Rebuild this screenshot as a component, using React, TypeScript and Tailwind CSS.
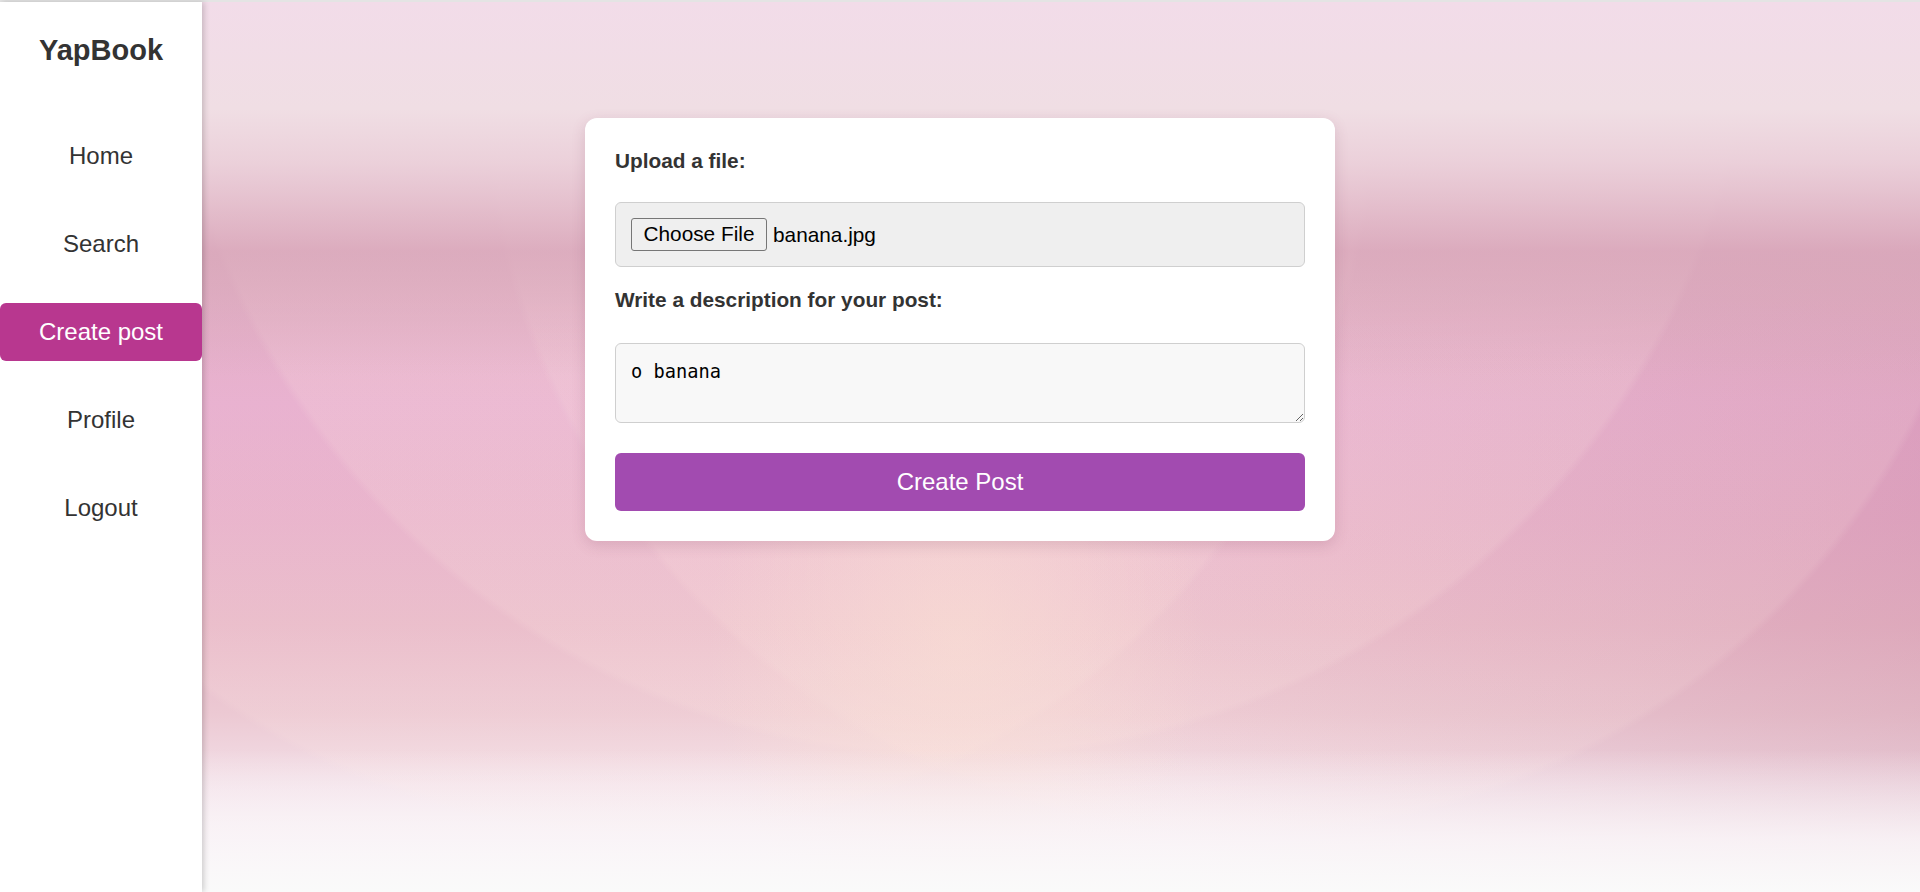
const NAV = ['Home', 'Search', 'Create post', 'Profile', 'Logout']

function Sidebar({ active }: { active: string }) {
  return (
    <aside className="relative z-10 flex w-[202px] shrink-0 flex-col bg-white pt-[31px] shadow-[2px_0_6px_rgba(0,0,0,0.18)]">
      <div className="text-center text-[29px] font-bold leading-[34px] text-[#333]">YapBook</div>
      <nav className="mt-[60px] flex flex-col gap-[30px]">
        {NAV.map((item) => (
          <a
            key={item}
            href="#"
            className={
              item === active
                ? 'flex h-[58px] items-center justify-center rounded-[6px] bg-[#b8378f] text-[24px] text-white'
                : 'flex h-[58px] items-center justify-center text-[24px] text-[#333]'
            }
          >
            {item}
          </a>
        ))}
      </nav>
    </aside>
  )
}

function CreatePostCard() {
  return (
    <form
      onSubmit={(e) => e.preventDefault()}
      className="ml-[383px] flex w-[750px] flex-col rounded-[12px] bg-white px-[30px] pt-[31px] pb-[30px] shadow-[0_4px_14px_rgba(120,60,90,0.18)]"
    >
      <label className="block text-[20.8px] font-bold leading-[23px] text-[#333]">Upload a file:</label>
      <div className="mt-[30px] flex h-[65px] items-center rounded-[6px] border border-[#cfcfcf] bg-[#efefef] px-[15px]">
        <button
          type="button"
          className="h-[33px] w-[136px] rounded-[3px] border border-[#767676] bg-[#efefef] text-[20.8px] leading-none text-black"
        >
          Choose File
        </button>
        <span className="ml-[6px] text-[20.8px] text-black">banana.jpg</span>
      </div>

      <label className="mt-[21px] block text-[20.8px] font-bold leading-[23px] text-[#333]">
        Write a description for your post:
      </label>
      <textarea
        defaultValue="o banana"
        className="mt-[32px] h-[80px] w-full rounded-[6px] border border-[#cfcfcf] bg-[#f8f8f8] px-[15px] pt-[17px] text-[18.7px] leading-[22px] text-black outline-none [font-family:'DejaVu_Sans_Mono',monospace]"
      />

      <button
        type="submit"
        className="mt-[30px] h-[58px] w-full rounded-[6px] bg-[#a24bb0] text-[24px] text-white"
      >
        Create Post
      </button>
    </form>
  )
}

export default function App() {
  return (
    <div className="flex h-[892px] flex-col overflow-hidden [font-family:'Liberation_Sans',Arial,sans-serif]">
      <div className="h-[2px] shrink-0 bg-[#e4e4e4]" />
      <div className="flex flex-1">
        <Sidebar active="Create post" />
        {/* wallpaper: soft vertical bands, a peach glow and three faint circles */}
        <main className="flex-1 pt-[116px] bg-[linear-gradient(to_bottom,rgba(250,250,250,0)_84%,rgba(250,245,248,0.85)_94%,#fafafa_100%),linear-gradient(to_bottom,#f2dce9_0%,#f0dee4_12%,rgba(235,208,218,0.95)_18%,rgba(218,168,188,0.8)_28%,rgba(222,168,196,0)_42%),radial-gradient(ellipse_250px_330px_at_755px_640px,rgba(250,224,212,0.6),rgba(250,224,212,0)),radial-gradient(circle_798px_at_758px_-40px,rgba(255,232,226,0.16)_790px,rgba(255,232,226,0)_798px),radial-gradient(circle_736px_at_438px_97px,rgba(255,232,226,0.14)_728px,rgba(255,232,226,0)_736px),radial-gradient(circle_760px_at_1040px_73px,rgba(255,232,226,0.14)_752px,rgba(255,232,226,0)_760px),linear-gradient(to_right,rgba(200,135,160,0)_50%,rgba(195,130,155,0.28)_100%),linear-gradient(to_bottom,#f2dce9_0%,#f0dee4_11%,#ebcfd9_17%,#deb0c0_24%,#d8a5b9_29%,#e0a6c4_36%,#e5a9cd_45%,#e6adc9_58%,#e8b8c8_70%,#ecc9d3_80%,#f3e0e8_88%,#fbf9fa_100%)]">
          <CreatePostCard />
        </main>
      </div>
    </div>
  )
}
